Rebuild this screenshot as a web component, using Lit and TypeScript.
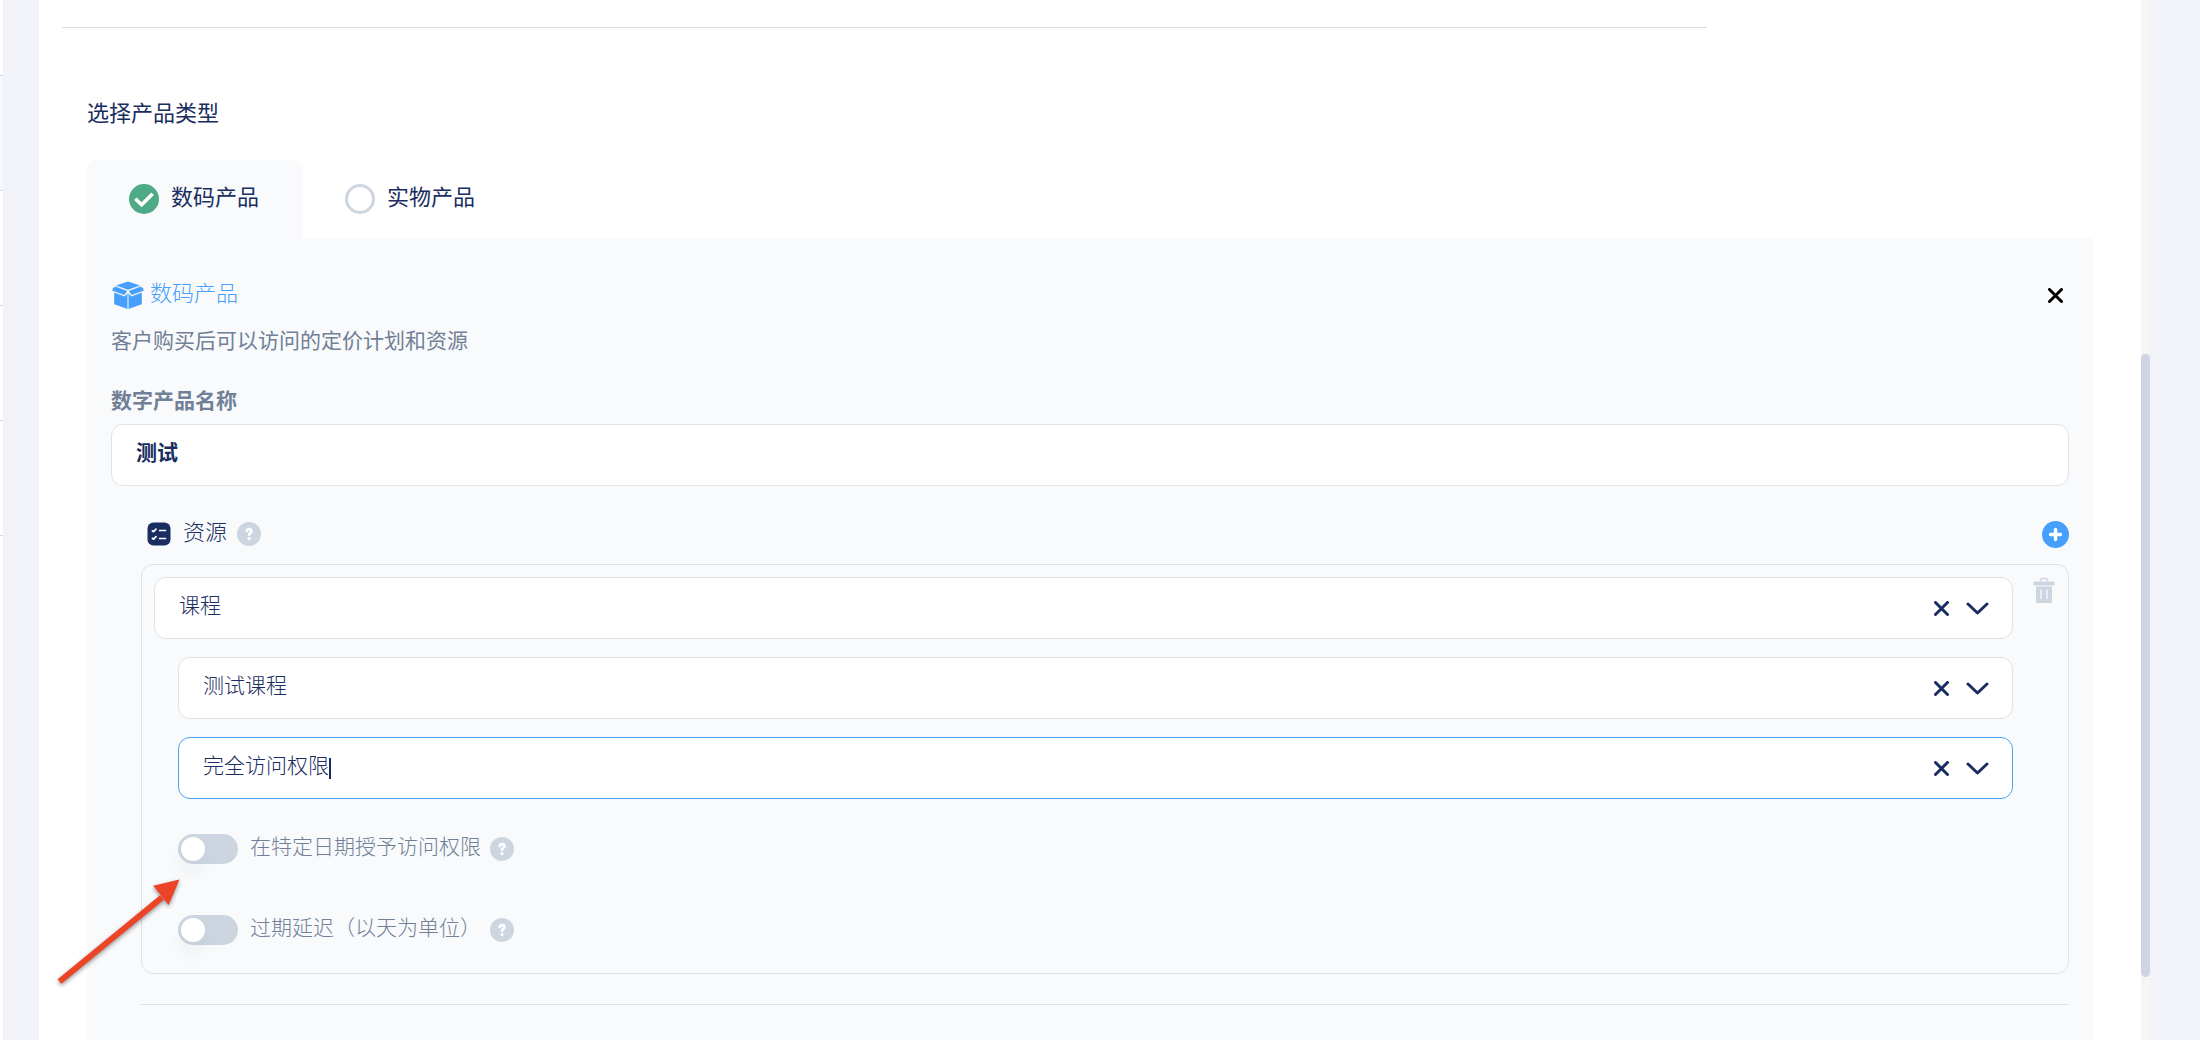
import { LitElement, html, css, svg, nothing } from "lit";
import { customElement, property, state } from "lit/decorators.js";

const crossPath = svg`<path d="M1.500 1.500 13.500 13.500M13.500 1.500 1.500 13.500" fill="none" stroke="currentColor" stroke-width="3" stroke-linecap="round"/>`;

@customElement("help-badge")
class HelpBadge extends LitElement {
  static styles = css`
    :host { display: inline-flex; }
    .badge {
      display: flex; width: 24px; height: 24px; padding: 0; border: 0;
      border-radius: 50%; background: #cdd5e1; color: #fff; cursor: help;
    }
  `;
  render() {
    return html`<button class="badge" type="button" aria-label="帮助">
      <svg width="24" height="24" viewBox="0 0 24 24" aria-hidden="true">
        <path d="M9.700 9C10 7.800 10.900 7.200 12 7.200c1.400 0 2.400.8 2.400 2 0 1.700-2.300 1.800-2.300 3.500" fill="none" stroke="currentColor" stroke-width="2.700" stroke-linecap="round"/>
        <circle cx="12" cy="16.600" r="1.600" fill="currentColor"/>
      </svg>
    </button>`;
  }
}

@customElement("select-field")
class SelectField extends LitElement {
  @property() label = "";
  @property() value = "";
  @property({ type: Boolean, reflect: true }) editing = false;

  static styles = css`
    :host { display: block; }
    .field {
      display: flex; align-items: center; box-sizing: border-box; height: 62px;
      padding: 0 23px 0 24px; border: 1px solid #dfe2e7; border-radius: 12px;
      background: #fff; color: #192d61;
    }
    :host([editing]) .field { border-color: #46a0f8; }
    .value {
      appearance: none; height: 60px; margin: 0; padding: 0 0 8px; border: 0; outline: 0;
      background: none; color: inherit; font: inherit; font-size: 21px; font-weight: 200;
    }
    .select { flex: 1; min-width: 0; }
    .search { field-sizing: content; caret-color: transparent; }
    .caret { width: 2px; height: 21px; margin-right: auto; background: #192d61; }
    .clear { display: flex; margin-right: 16px; padding: 0; border: 0; background: none; color: inherit; cursor: pointer; }
    .chevron { display: block; }
  `;

  render() {
    return html`<div class="field">
      ${this.editing
        ? html`<input class="value search" role="combobox" aria-expanded="false" aria-label=${this.label} .value=${this.value} />
            <span class="caret"></span>`
        : html`<select class="value select" aria-label=${this.label}><option>${this.value}</option></select>`}
      <button class="clear" type="button" aria-label="清除">
        <svg width="15" height="15" viewBox="0 0 15 15" aria-hidden="true">${crossPath}</svg>
      </button>
      <svg class="chevron" width="24" height="16" viewBox="0 0 24 16" aria-hidden="true">
        <path d="M3 4 12.500 13 22 4" fill="none" stroke="currentColor" stroke-width="3" stroke-linecap="round" stroke-linejoin="round"/>
      </svg>
    </div>`;
  }
}

@customElement("toggle-row")
class ToggleRow extends LitElement {
  @property() label = "";

  static styles = css`
    :host { display: flex; align-items: center; gap: 9px; height: 30px; }
    .row { display: flex; align-items: center; gap: 12px; cursor: pointer; }
    .switch {
      appearance: none; width: 60px; height: 30px; margin: 0; padding: 3px;
      box-sizing: border-box; border-radius: 15px; background: #cdd5e1;
    }
    .switch::before {
      content: ""; display: block; width: 24px; height: 24px; border-radius: 50%;
      background: #fff; box-shadow: 0 12px 20px rgba(0, 0, 0, 0.05);
    }
    .switch:checked { background: #4faa87; }
    .switch:checked::before { margin-left: 30px; }
    .text { padding-bottom: 8px; color: #718096; font-size: 21px; font-weight: 200; line-height: 30px; white-space: nowrap; }
  `;

  render() {
    return html`<label class="row">
        <input class="switch" type="checkbox" role="switch" />
        <span class="text">${this.label}</span>
      </label>
      <help-badge></help-badge>`;
  }
}

@customElement("app-root")
class AppRoot extends LitElement {
  @state() private kind = "digital";

  private kinds = [
    { id: "digital", label: "数码产品" },
    { id: "physical", label: "实物产品" },
  ];

  private navItems = ["", "current", "", "", ""];

  static styles = css`
    :host {
      display: flex; position: relative; min-height: 100vh; overflow: hidden;
      background: #f1f3f8; color: #192d61;
      font-family: "Noto Sans CJK SC", sans-serif;
    }
    .nav { display: flex; flex-direction: column; width: 3px; margin-right: 36px; background: #fff; }
    .nav-item { box-sizing: border-box; height: 115px; border-bottom: 1px solid #d5dae4; }
    .nav-item:first-child { height: 76px; }
    .nav-item.current { background: #f1f9ff; }
    .page { flex: 1; min-width: 0; padding: 27px 48px 0; background: #fff; }
    .top-rule { width: 82%; height: 1px; margin: 0 0 0 -25px; border: 0; background: #d9dde5; }
    .title { margin: 67px 0 33px; font-size: 22px; font-weight: 400; line-height: 32px; }

    .tabs { display: flex; margin: 0; padding: 0; border: 0; }
    .tab {
      display: flex; align-items: center; gap: 12px; height: 78px; padding: 0 44px 0 42px;
      border-radius: 9px 9px 0 0; font-size: 22px; font-weight: 400; cursor: pointer;
    }
    .tab.active { background: #f8fafc; }
    .mark { display: grid; }
    .mark > * { grid-area: 1 / 1; }
    .radio {
      appearance: none; box-sizing: border-box; width: 30px; height: 30px; margin: 0;
      border: 3px solid #cdd5e1; border-radius: 50%;
    }
    .radio:checked { border-color: #4faa87; background: #4faa87; }
    .check { pointer-events: none; }
    .tab-text { padding-bottom: 8px; line-height: 32px; }

    .panel { padding: 41px 24px 36px; background: #f8fafc; }
    .head { display: flex; align-items: center; height: 32px; }
    .product { display: flex; align-items: center; gap: 5px; margin: 0 auto 0 0; color: #46a0fb; font-size: 22px; font-weight: 200; line-height: 32px; }
    .product-text { padding-bottom: 8px; }
    .close { display: flex; margin-right: 6px; padding: 0; border: 0; background: none; color: #000; cursor: pointer; }
    .note { margin: 12px 0 28px; color: #718096; font-size: 21px; font-weight: 400; line-height: 32px; }
    .label { display: block; margin-bottom: 9px; color: #718096; font-size: 21px; font-weight: 700; line-height: 32px; }
    .name {
      display: block; box-sizing: border-box; width: 100%; height: 62px; padding: 0 24px 8px;
      border: 1px solid #dfe4e9; border-radius: 12px; outline: 0; background: #fff;
      color: #192d61; font: inherit; font-size: 21px; font-weight: 700;
    }

    .resources { margin: 32px 0 0 30px; }
    .bar { display: flex; align-items: center; height: 32px; margin-bottom: 14px; padding-left: 6px; }
    .bar-title { margin: 0 10px 0 12px; padding-bottom: 8px; font-size: 22px; font-weight: 200; line-height: 32px; }
    .add { display: flex; margin-left: auto; padding: 0; border: 0; border-radius: 50%; background: #46a0fb; color: #fff; cursor: pointer; }
    .group {
      display: flex; align-items: flex-start; gap: 20px; padding: 12px 13px 28px 12px;
      border: 1px solid #dfe2e7; border-radius: 12px;
    }
    .fields { display: flex; flex: 1; flex-direction: column; gap: 18px; min-width: 0; }
    .nested { display: flex; flex-direction: column; gap: 18px; padding-left: 24px; }
    .toggles { display: flex; flex-direction: column; gap: 51px; margin-top: 17px; }
    .trash { display: flex; padding: 0; border: 0; background: none; cursor: pointer; }
    .end-rule { height: 1px; margin: 30px 0 0; border: 0; background: #dde0e7; }

    .track { width: 9px; padding-top: 354px; margin-right: 50px; background: #f5f5f5; }
    .thumb { height: 623px; border-radius: 5px; background: #ced4e2; }
    .arrow { position: absolute; left: 48px; top: 870px; pointer-events: none; filter: drop-shadow(0 2px 2px rgba(0, 0, 0, 0.4)); }
  `;

  private renderTab(k: { id: string; label: string }) {
    const on = this.kind === k.id;
    return html`<label class="tab ${on ? "active" : ""}">
      <span class="mark">
        <input class="radio" type="radio" name="kind" .checked=${on} @change=${() => (this.kind = k.id)} />
        ${on
          ? html`<svg class="check" width="30" height="30" viewBox="0 0 30 30" aria-hidden="true">
              <path d="M7.600 16 12.600 20.800 22.400 11" fill="none" stroke="#fff" stroke-width="3.600" stroke-linecap="square"/>
            </svg>`
          : nothing}
      </span>
      <span class="tab-text">${k.label}</span>
    </label>`;
  }

  render() {
    return html`
      <nav class="nav">${this.navItems.map((c) => html`<span class="nav-item ${c}"></span>`)}</nav>
      <main class="page">
        <hr class="top-rule" />
        <h2 class="title">选择产品类型</h2>
        <fieldset class="tabs" aria-label="选择产品类型">${this.kinds.map((k) => this.renderTab(k))}</fieldset>
        <section class="panel">
          <header class="head">
            <h3 class="product">
              <svg width="34" height="30" viewBox="0 0 34 30" aria-hidden="true">
                <g fill="currentColor">
                  <path d="M17 1.500 29 5.500 17 9.800 5 5.500z"/>
                  <path d="M4.300 6.600 16.200 11 13.400 15 1.600 10.700Q1 9.500 1.900 8.600z"/>
                  <path d="M29.700 6.600 17.800 11 20.600 15 32.400 10.700Q33 9.500 32.100 8.600z"/>
                  <path d="M3.200 12.600 13.700 16.400 16.500 13.200V29L4 24.600Q3.200 24.200 3.200 23.400z"/>
                  <path d="M30.800 12.600 20.300 16.400 17.500 13.200V29L30 24.600Q30.800 24.200 30.800 23.400z"/>
                </g>
              </svg>
              <span class="product-text">数码产品</span>
            </h3>
            <button class="close" type="button" aria-label="关闭">
              <svg width="15" height="15" viewBox="0 0 15 15" aria-hidden="true">${crossPath}</svg>
            </button>
          </header>
          <p class="note">客户购买后可以访问的定价计划和资源</p>
          <label class="label" for="product-name">数字产品名称</label>
          <input class="name" id="product-name" type="text" .value=${"测试"} />

          <div class="resources">
            <div class="bar">
              <svg width="24" height="24" viewBox="0 0 24 24" aria-hidden="true">
                <rect x=".5" y=".5" width="23" height="23" rx="6" fill="currentColor"/>
                <g fill="none" stroke="#fff" stroke-width="1.700" stroke-linecap="round" stroke-linejoin="round">
                  <path d="M5.400 8.800 6.600 9.700 9 7.200M5.400 16.300 6.600 17.200 9 14.700M12.600 8.500h5.900M12.600 16.500h5.900"/>
                </g>
              </svg>
              <h3 class="bar-title">资源</h3>
              <help-badge></help-badge>
              <button class="add" type="button" aria-label="添加资源">
                <svg width="27" height="27" viewBox="0 0 27 27" aria-hidden="true">
                  <path d="M13.500 8.500v10M8.500 13.500h10" stroke="currentColor" stroke-width="3.400" stroke-linecap="round"/>
                </svg>
              </button>
            </div>
            <div class="group">
              <div class="fields">
                <select-field label="资源类型" value="课程"></select-field>
                <div class="nested">
                  <select-field label="课程" value="测试课程"></select-field>
                  <select-field label="访问权限" value="完全访问权限" editing></select-field>
                  <div class="toggles">
                    <toggle-row label="在特定日期授予访问权限"></toggle-row>
                    <toggle-row label="过期延迟（以天为单位）"></toggle-row>
                  </div>
                </div>
              </div>
              <button class="trash" type="button" aria-label="删除">
                <svg width="22" height="26" viewBox="0 0 22 26" aria-hidden="true">
                  <path d="M7.500 4.500V3Q7.500 1.500 9 1.500h4Q14.500 1.500 14.500 3v1.500" fill="none" stroke="#cdd5e1" stroke-width="1.400"/>
                  <rect x=".5" y="4.500" width="21" height="4" rx="1" fill="#cdd5e1"/>
                  <path d="M3 9.500h16v15.500q0 1-1 1H4q-1 0-1-1z" fill="#cdd5e1"/>
                  <path d="M8 13v8.500M14 13v8.500" stroke="#f8fafc" stroke-width="1.300" stroke-linecap="round"/>
                </svg>
              </button>
            </div>
            <hr class="end-rule" />
          </div>
        </section>
      </main>
      <div class="track"><div class="thumb"></div></div>
      <svg class="arrow" width="140" height="120" viewBox="0 0 140 120" aria-hidden="true">
        <path d="M11.500 111.500 114 27.500" fill="none" stroke="#ec4427" stroke-width="6"/>
        <path d="M131.500 9.500 105.200 15.800 120.600 35z" fill="#ec4427"/>
      </svg>
    `;
  }
}
